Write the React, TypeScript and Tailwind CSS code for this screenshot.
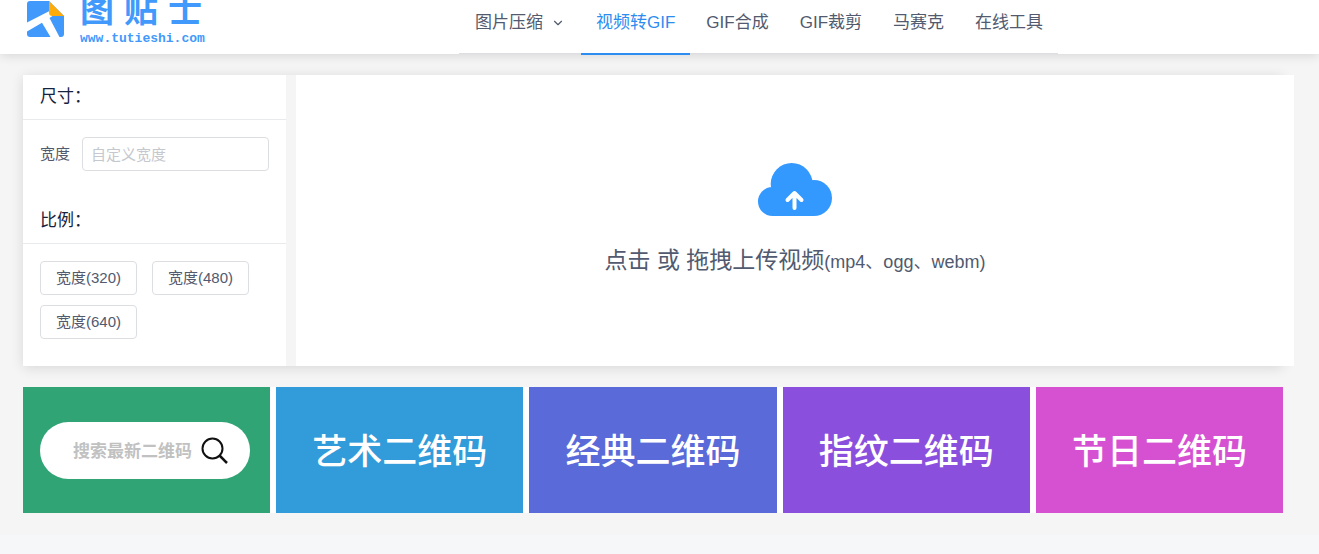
import { ChevronDown } from 'lucide-react';

const navItems = [
  { label: '图片压缩', dropdown: true },
  { label: '视频转GIF', active: true },
  { label: 'GIF合成' },
  { label: 'GIF裁剪' },
  { label: '马赛克' },
  { label: '在线工具' },
];

const widths = [320, 480, 640];

const banners = [
  { label: '艺术二维码', color: 'bg-[#329bd9]' },
  { label: '经典二维码', color: 'bg-[#5a6ad9]' },
  { label: '指纹二维码', color: 'bg-[#8a4fdd]' },
  { label: '节日二维码', color: 'bg-[#d651d2]' },
];

function Logo() {
  return (
    <a href="#" className="-mt-2 flex w-[432px] shrink-0 items-start pl-[27px] text-[#4199fc]">
      <svg viewBox="0 0 37 36" className="mt-[9px] h-9 w-[37px]" aria-hidden="true">
        <path d="M3 0H22L37 15V33a3 3 0 0 1-3 3H3a3 3 0 0 1-3-3V3a3 3 0 0 1 3-3Z" fill="#4199fc" />
        <path d="M0 21.500 22.500 10 25.500 15 22.500 17 32.500 36H23.500L15 21.700 0 30.500Z" fill="#fff" />
        <path d="M22 0 37 15H25.500a3.500 3.500 0 0 1-3.500-3.500Z" fill="#ffab0a" />
      </svg>
      <span className="ml-4 flex flex-col">
        <span className="flex gap-[10px] text-[34px] leading-9 font-bold">
          <span>图</span>
          <span>贴</span>
          <span>士</span>
        </span>
        <span className="mt-[3px] font-['Liberation_Mono',monospace] text-[13px] leading-4 font-bold">www.tutieshi.com</span>
      </span>
    </a>
  );
}

function PanelTitle({ children }: { children: string }) {
  return (
    <h2 className="border-b border-[#e8eaec] px-[17px] py-[10px] text-[17px] leading-6 text-[#17233d]">{children}</h2>
  );
}

function CloudIcon() {
  return (
    <svg viewBox="0 0 74 53" className="h-[53px] w-[74px]" aria-hidden="true">
      <g fill="#3399ff">
        <circle cx="33.700" cy="21" r="21" />
        <circle cx="14.500" cy="38.500" r="14.500" />
        <circle cx="56" cy="35" r="18" />
        <path d="M14.500 24H56V53H14.500Z" />
      </g>
      <path d="M36.500 45V30M29.500 37 36.500 30 43.500 37" fill="none" stroke="#fff" strokeWidth="4" strokeLinecap="round" strokeLinejoin="round" />
    </svg>
  );
}

export default function App() {
  return (
    <div className="min-h-screen bg-[#f5f7f9] font-['Liberation_Sans','Noto_Sans_CJK_SC',sans-serif] text-[#515a6e]">
      <header className="relative z-10 flex h-[54px] items-start bg-white shadow-[0_2px_10px_rgba(0,0,0,0.12)]">
        <Logo />
        <nav className="ml-[27px] flex h-[54px] gap-px border-b border-[#dcdee2] pl-px">
          {navItems.map((item) => (
            <a
              key={item.label}
              href="#"
              className={`flex h-[55px] items-center border-b-2 px-[15px] pb-2 text-[17px] whitespace-nowrap ${
                item.active ? 'border-[#2d8cf0] text-[#2d8cf0]' : 'border-transparent'
              }`}
            >
              {item.label}
              {item.dropdown && <ChevronDown className="ml-2 size-[14px]" />}
            </a>
          ))}
        </nav>
      </header>

      <main className="bg-[#f5f5f5] pt-[21px] pr-9 pb-[22px] pl-[23px]">
        <div className="flex gap-[10px] shadow-[0_2px_12px_rgba(0,0,0,0.12)]">
          {/* 尺寸設定 */}
          <section className="w-[263px] shrink-0 bg-white pb-[27px]">
            <PanelTitle>尺寸：</PanelTitle>
            <div className="flex items-center gap-3 px-[17px] pt-[17px] pb-7 text-[15px]">
              <label htmlFor="width" className="shrink-0">宽度</label>
              <input
                id="width"
                type="text"
                placeholder="自定义宽度"
                className="h-[34px] w-full min-w-0 rounded border border-[#dcdee2] px-2 placeholder:text-[#c5c8ce]"
              />
            </div>
            <PanelTitle>比例：</PanelTitle>
            <div className="flex flex-wrap gap-x-[15px] gap-y-[10px] px-[17px] pt-[17px]">
              {widths.map((w) => (
                <button key={w} type="button" className="h-[34px] rounded border border-[#dcdee2] bg-white px-[15px] text-[15px]">
                  {`宽度(${w})`}
                </button>
              ))}
            </div>
          </section>

          {/* 上傳區 */}
          <button type="button" className="-mr-[11px] flex flex-1 flex-col items-center justify-center bg-white">
            <CloudIcon />
            <span className="mt-7 text-[23px] leading-8">
              点击 或 拖拽上传视频<small className="text-lg leading-8">(mp4、ogg、webm)</small>
            </span>
          </button>
        </div>

        {/* 二維碼橫幅 */}
        <div className="mt-[21px] grid grid-cols-5 gap-[6px] bg-white">
          <form className="flex h-[126px] items-center bg-[#31a475] pr-5 pl-[17px]">
            <div className="flex h-[57px] w-full items-center rounded-full bg-white pr-[22px] pl-[33px]">
              <input
                type="text"
                aria-label="搜索最新二维码"
                placeholder="搜索最新二维码"
                className="w-full min-w-0 pt-1 text-[17px] font-bold placeholder:text-[#c1c1c1]"
              />
              <button type="submit" aria-label="搜索" className="shrink-0">
                <svg viewBox="0 0 27 27" className="size-[27px]" fill="none" stroke="#111" strokeWidth="2">
                  <circle cx="11.500" cy="11.500" r="10" />
                  <path d="M18.500 18.500 26 26" strokeWidth="2.500" />
                </svg>
              </button>
            </div>
          </form>
          {banners.map((b) => (
            <a key={b.label} href="#" className={`flex h-[126px] items-center justify-center pt-1 text-[35px] font-medium text-white ${b.color}`}>
              {b.label}
            </a>
          ))}
        </div>
      </main>
    </div>
  );
}
